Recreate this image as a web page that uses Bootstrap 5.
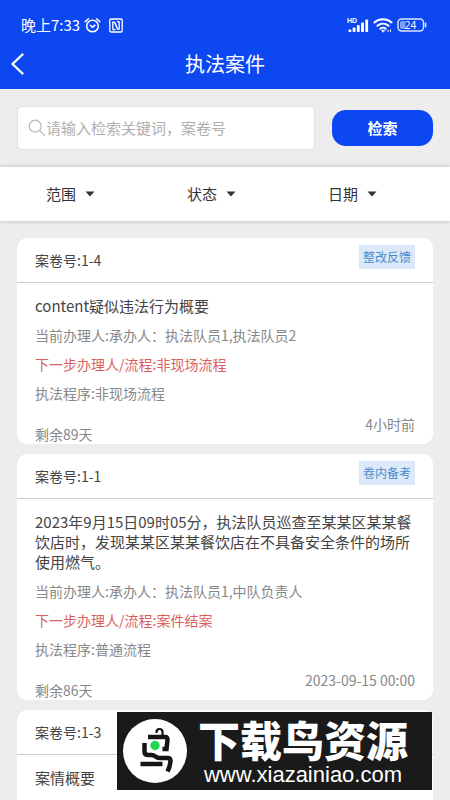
<!DOCTYPE html>
<html lang="zh-CN">
<head>
<meta charset="utf-8">
<meta name="viewport" content="width=device-width, initial-scale=1">
<title>执法案件</title>
<link href="https://cdn.jsdelivr.net/npm/bootstrap@5.3.0/dist/css/bootstrap.min.css" rel="stylesheet">
<style>
  body { font-family: "Noto Sans CJK SC", "Liberation Sans", sans-serif; background: #ededed; color: #444; font-size: 15px; line-height: 20px; }
  svg { display: block; flex: none; }
  .app-head { background: #0d47f1; }
  .status-line { padding: 15px 23px 0 21px; }
  .title-line { height: 50px; padding-bottom: 1px; }
  .title-line h1 { font-size: 20px; line-height: 28px; }
  .back-btn { width: 36px; }
  .search-line { padding: 17px 17px; gap: 17px; }
  .search-box { height: 44px; border: 1px solid #e2e2e2; border-radius: 5px; padding: 0 10px; }
  .search-box input { outline: 0; color: #444; }
  .search-box input::placeholder { color: #b0b0b0; }
  .search-btn { width: 101px; height: 36px; border-radius: 14px; background: #0d47f1; font-size: 15px; line-height: 20px; }
  .filter-bar { height: 54px; padding-right: 27px; box-shadow: 0 0 4px rgba(0,0,0,.25); }
  .filter-bar button { color: #333; gap: 9px; }
  .case-list { padding: 17px 17px 0; gap: 10px; }
  .case-card { border-radius: 10px; }
  .case-head { height: 45px; padding: 0 18px; border-bottom: 1px solid #ccc; font-size: 14px; }
  .case-tag { background: #dce9f9; color: #4a8ccb; font-size: 12px; line-height: 24px; padding: 0 4px; margin-top: 7px; }
  .case-body { padding: 13px 18px 0; }
  .case-body h2 { font-size: 15px; line-height: 20px; margin-bottom: 5px; }
  .case-body p, .case-foot { font-size: 14px; color: #888; }
  .case-body p { line-height: 29px; }
  .case-body .next-step { color: #dc5f5f; }
  .case-foot { height: 36px; padding-top: 6px; }
  .site-mark { right: 18px; bottom: 10px; height: 78px; background: #1a1a1a; padding: 0 24px 0 6px; gap: 11px; }
  .site-name { font-size: 42px; line-height: 47px; font-weight: 900; }
  .site-url { font-family: "Liberation Sans", sans-serif; font-size: 22px; line-height: 25px; }
</style>
<script src="https://cdn.jsdelivr.net/npm/bootstrap@5.3.0/dist/js/bootstrap.bundle.min.js"></script>
</head>
<body>
<div class="vh-100 d-flex flex-column overflow-hidden position-relative">
  <header class="app-head text-white">
    <div class="status-line d-flex align-items-center">
      <span>晚上7:33</span>
      <svg class="ms-1" width="17" height="17" viewBox="0 0 17 17" fill="none" stroke="#fff" stroke-width="1.5" stroke-linecap="round"><circle cx="8.5" cy="9" r="5.8"/><path d="M1.2 4.6 4.5 1.7M15.8 4.6 12.5 1.7M6.3 8.2l2.2 2 2.5-2"/></svg>
      <svg class="ms-2" width="14" height="15" viewBox="0 0 14 15" fill="none" stroke="#fff" stroke-width="1.3"><rect x=".8" y="1" width="12.4" height="13" rx="1.2"/><path d="M3.8 11.800V4.200h1.700l2.500 5.800M3.800 11.600h2.700M10.200 3.500v7.600H8.600L6.300 5.500M10.200 3.700H7.800"/></svg>
      <svg class="ms-auto" width="22" height="16" viewBox="0 0 22 16" fill="#fff"><text x="0" y="6" font-family="Liberation Sans, sans-serif" font-size="7" font-weight="700">HD</text><rect x="1.500" y="12.500" width="2.800" height="2.500" rx=".8"/><rect x="5.700" y="10.500" width="2.800" height="4.500" rx=".8"/><rect x="9.900" y="8" width="2.800" height="7" rx=".8"/><rect x="14.100" y="5.500" width="2.800" height="9.500" rx=".8"/><rect x="18.300" y="2.500" width="2.800" height="12.500" rx=".8"/></svg>
      <svg class="ms-1" width="20" height="16" viewBox="0 0 20 16" fill="none" stroke="#fff" stroke-width="1.9" stroke-linecap="round"><path d="M1.4 5.5c4.8-4.3 12.4-4.300 17.200 0M4.400 8.800c3.300-2.800 7.900-2.800 11.200 0M7.200 11.700c1.800-1.400 3.800-1.400 5.600 0"/><path d="m10 15-1.500-1.800h3z" fill="#fff" stroke-width=".8"/><path d="M15 13.300v1.500M17.500 12.900v1.500" stroke-width="1"/></svg>
      <svg class="ms-1" width="30" height="14" viewBox="0 0 30 14"><rect x="1" y="1" width="25.5" height="12" rx="3.5" fill="none" stroke="#dce5ff" stroke-width="1.4"/><rect x="3" y="3" width="5.500" height="8" rx="1.5" fill="#7f9efa"/><rect x="27.8" y="4.5" width="1.6" height="5" rx=".8" fill="#dce5ff"/><text x="13.500" y="10.500" text-anchor="middle" fill="#fff" font-family="Noto Sans, sans-serif" font-size="10">24</text></svg>
    </div>
    <div class="title-line mt-1 d-flex align-items-center">
      <button type="button" class="back-btn btn p-0 border-0" aria-label="返回"><svg class="ms-2" width="18" height="24" viewBox="0 0 18 24" fill="none" stroke="#fff" stroke-width="2.4" stroke-linecap="round" stroke-linejoin="round"><path d="M14.500 2.500 4.500 12l10 9.500"/></svg></button>
      <h1 class="flex-fill text-center fw-normal m-0">执法案件</h1>
      <span class="back-btn"></span>
    </div>
  </header>

  <form class="search-line d-flex align-items-center">
    <label class="search-box bg-white flex-fill d-flex align-items-center">
      <svg width="18" height="18" viewBox="0 0 18 18" fill="none" stroke="#b8b8b8" stroke-width="1.2" stroke-linecap="round"><circle cx="7.2" cy="7.2" r="6"/><path d="m11.6 11.6 5 5"/></svg>
      <input class="border-0 p-0 flex-fill bg-transparent w-100" type="text" aria-label="检索关键词" placeholder="请输入检索关键词，案卷号">
    </label>
    <button type="button" class="search-btn btn text-white fw-bold border-0 p-0 flex-shrink-0">检索</button>
  </form>

  <nav class="filter-bar bg-white d-flex flex-shrink-0" aria-label="筛选">
    <button type="button" class="border-0 bg-transparent flex-fill d-flex align-items-center justify-content-center p-0">范围<svg width="10" height="6" viewBox="0 0 10 6" fill="#333"><path d="M.5.5h9L5 5.5z"/></svg></button>
    <button type="button" class="border-0 bg-transparent flex-fill d-flex align-items-center justify-content-center p-0">状态<svg width="10" height="6" viewBox="0 0 10 6" fill="#333"><path d="M.5.5h9L5 5.5z"/></svg></button>
    <button type="button" class="border-0 bg-transparent flex-fill d-flex align-items-center justify-content-center p-0">日期<svg width="10" height="6" viewBox="0 0 10 6" fill="#333"><path d="M.5.5h9L5 5.5z"/></svg></button>
  </nav>

  <main class="case-list d-flex flex-column flex-fill overflow-hidden">
    <article class="case-card bg-white flex-shrink-0">
      <div class="case-head d-flex justify-content-between align-items-center"><span>案卷号:1-4</span><span class="case-tag align-self-start">整改反馈</span></div>
      <div class="case-body">
        <h2 class="fw-normal">content疑似违法行为概要</h2>
        <p class="m-0">当前办理人:承办人：执法队员1,执法队员2</p>
        <p class="m-0 next-step">下一步办理人/流程:非现场流程</p>
        <p class="m-0">执法程序:非现场流程</p>
        <div class="case-foot d-flex justify-content-between"><span class="align-self-end">剩余89天</span><time>4小时前</time></div>
      </div>
    </article>
    <article class="case-card bg-white flex-shrink-0">
      <div class="case-head d-flex justify-content-between align-items-center"><span>案卷号:1-1</span><span class="case-tag align-self-start">卷内备考</span></div>
      <div class="case-body">
        <h2 class="fw-normal">2023年9月15日09时05分，执法队员巡查至某某区某某餐饮店时，发现某某区某某餐饮店在不具备安全条件的场所使用燃气。</h2>
        <p class="m-0">当前办理人:承办人：执法队员1,中队负责人</p>
        <p class="m-0 next-step">下一步办理人/流程:案件结案</p>
        <p class="m-0">执法程序:普通流程</p>
        <div class="case-foot d-flex justify-content-between"><span class="align-self-end">剩余86天</span><time>2023-09-15 00:00</time></div>
      </div>
    </article>
    <article class="case-card bg-white rounded-bottom-0 flex-grow-1 flex-shrink-0">
      <div class="case-head d-flex align-items-center"><span>案卷号:1-3</span></div>
      <div class="case-body"><h2 class="fw-normal">案情概要</h2></div>
    </article>
  </main>

  <aside class="site-mark position-absolute d-flex align-items-center text-white">
    <svg width="64" height="64" viewBox="0 0 64 64" fill="none" stroke="#151515" stroke-width="4.500"><circle cx="32" cy="32" r="32" fill="#fff" stroke="none"/><path d="M33.500 14v-1c0-4 6-4 6 0v3" stroke-width="2.200"/><path d="M25 18h17q2.500 0 2.500 3l-1 9h-4"/><path d="M21.500 24v9q0 3 4 3h3q2 0 4 1.500t4 1.500h8q3 0 3 3-.5 6-3 10.500"/><path d="M17.500 45h22"/><circle cx="32" cy="26.500" r="4.700" fill="#22d455" stroke="none"/></svg>
    <div class="text-center">
      <div class="site-name">下载鸟资源</div>
      <div class="site-url">www.xiazainiao.com</div>
    </div>
  </aside>
</div>
</body>
</html>
